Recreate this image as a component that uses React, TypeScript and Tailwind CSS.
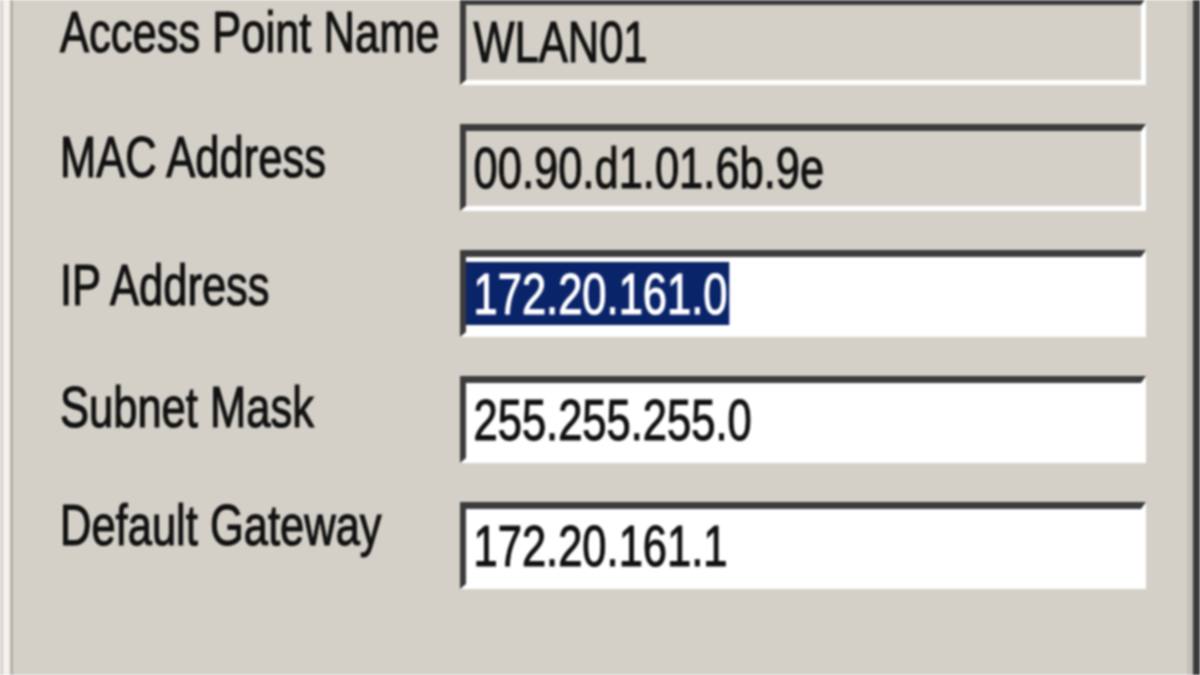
const fields = [
  { label: "Access Point Name", value: "WLAN01", readOnly: true, labelOffset: "-mt-[2px]" },
  { label: "MAC Address", value: "00.90.d1.01.6b.9e", readOnly: true, labelOffset: "-mt-[3px]" },
  { label: "IP Address", value: "172.20.161.0", selected: true, labelOffset: "-mt-[1px]" },
  { label: "Subnet Mask", value: "255.255.255.0", labelOffset: "-mt-[5px]" },
  { label: "Default Gateway", value: "172.20.161.1", labelOffset: "-mt-[13px]" },
];

const App = () => {
  return (
    <div className="w-[1200px] h-[675px] overflow-hidden bg-[#d4d0c8] flex font-['Liberation_Sans',Arial,sans-serif] text-[58px] text-[#111] [-webkit-text-stroke:1.2px_#111] blur-[0.9px]">
      {/* tab page left edge */}
      <div className="w-[3px] bg-[#d4d0c8]" />
      <div className="w-[7px] bg-[#f4f2ee]" />
      <div className="w-[3px] bg-[#b3afa7]" />

      <div className="flex-1 flex flex-col gap-[39px] -mt-[2px]">
        {fields.map((field, index) => (
          <div key={index} className="flex items-start">
            <div className={`w-[447px] pl-[47px] leading-[72px] whitespace-nowrap ${field.labelOffset}`}>
              <span className="inline-block origin-left scale-x-[0.75]">{field.label}</span>
            </div>
            <div
              className={`w-[686px] h-[87px] border-t-[7px] border-l-[6px] border-b-[5px] border-r-[5px] border-t-[#3c3c3c] border-l-[#3c3c3c] border-b-white border-r-white ${
                field.readOnly ? "bg-[#d4d0c8]" : "bg-white"
              }`}
            >
              <div className="h-full flex items-start pt-[5px] whitespace-nowrap">
                {field.selected ? (
                  <span className="block origin-left scale-x-[0.75] leading-[63px] bg-[#0a246a] text-white [-webkit-text-stroke:1.2px_#fff] pl-[10px] pr-[2px]">
                    {field.value}
                  </span>
                ) : (
                  <span className="block origin-left scale-x-[0.75] leading-[63px] pl-[10px]">{field.value}</span>
                )}
              </div>
            </div>
          </div>
        ))}
      </div>

      {/* right edge */}
      <div className="w-[6px] bg-[#c4c0b8]" />
      <div className="w-[7px] bg-[#3a3a3a]" />
    </div>
  );
};

export default App;
